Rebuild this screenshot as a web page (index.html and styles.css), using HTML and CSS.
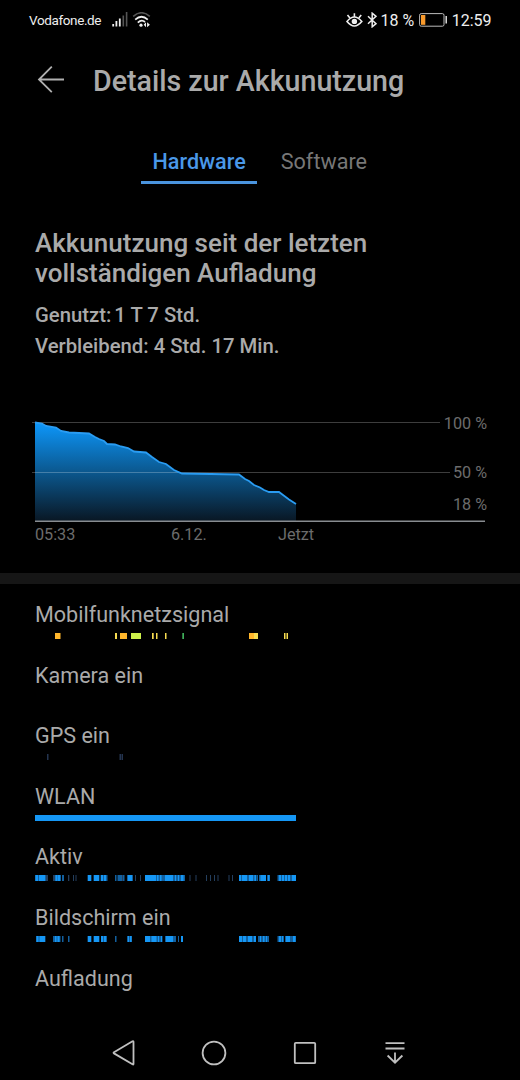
FILE: index.html
```html
<!DOCTYPE html>
<html lang="de">
<head>
    <meta charset="UTF-8">
    <meta name="viewport" content="width=device-width, initial-scale=1.0">
    <title>Details zur Akkunutzung</title>
    <link rel="stylesheet" href="styles.css">
</head>
<body>
    <div class="status-bar">
        <span class="carrier">Vodafone.de</span>
        <svg class="signal" width="16" height="16" viewBox="0 0 16 16">
            <path d="M1.2 12v2.6M4.4 9v5.6M7.8 6.5v8.1" stroke="#eee" stroke-width="1.8"/>
            <path d="M11.3 3.5v11.1M14.6 0v14.6" stroke="#555" stroke-width="1.6"/>
        </svg>
        <svg class="wifi" width="19" height="16" viewBox="0 0 19 16" fill="none">
            <path d="M1.2 4.3Q9.5-2.8 17.8 4.3" stroke="#555" stroke-width="1.6"/>
            <path d="M3.2 7.6Q9.5 1.9 15.8 7.6M5.8 10.7Q9.5 7 13 10" stroke="#eee" stroke-width="1.7"/>
            <circle cx="9" cy="13.2" r="1.6" fill="#eee"/>
            <path d="M14 10.2v5l-2.3-2.5zM15.1 10.2v5l2.8-2.5z" fill="#eee"/>
        </svg>
        <div class="status-right">
            <svg class="eye" width="17" height="15" viewBox="0 0 17 15" fill="none" stroke="#eee" stroke-width="1.6">
                <path d="M1 8.500Q8.300-.4 15.800 8.500Q8.300 17.400 1 8.500z"/>
                <path d="M8.400 4V.3M3.900 5L1.500 2M12.800 5l2.400-3"/>
                <circle cx="8.400" cy="8.400" r="2.700" fill="#eee" stroke="none"/>
            </svg>
            <svg class="bluetooth" width="11" height="16" viewBox="0 0 11 16" fill="none" stroke="#eee" stroke-width="1.5">
                <path d="M1 4.200l8 7.400-3.800 3.200V1.200L9 4.400 1 11.800"/>
            </svg>
            <span class="percent">18 %</span>
            <svg class="battery" width="29" height="14" viewBox="0 0 29 14">
                <rect x=".6" y=".6" width="24.400" height="12.600" rx="1.600" fill="none" stroke="#bbb"/>
                <rect x="2" y="2" width="4.300" height="9.800" fill="#f89a2c"/>
                <path d="M27.200 3v7.400" stroke="#eee" stroke-width="1.400"/>
            </svg>
            <span class="clock">12:59</span>
        </div>
    </div>

    <header class="title-bar">
        <svg width="28" height="28" viewBox="0 0 28 28" fill="none" stroke="#b0b0b0" stroke-width="1.8">
            <path d="M27 13.500H2M14.800 .7L2 13.500l12.800 12.600"/>
        </svg>
        <h1>Details zur Akkunutzung</h1>
    </header>

    <nav class="tabs">
        <a class="tab active">Hardware</a>
        <a class="tab">Software</a>
    </nav>

    <section class="summary">
        <h2>Akkunutzung seit der letzten vollständigen Aufladung</h2>
        <p class="used">Genutzt: <span>1 T 7 Std.</span></p>
        <p>Verbleibend: <span>4 Std. 17 Min.</span></p>
    </section>

    <section class="chart">
        <svg width="488" height="150" viewBox="32 405 488 150">
            <defs>
                <linearGradient id="level" x1="0" y1="0" x2="0" y2="1">
                    <stop offset="0" stop-color="#0d97fb"/>
                    <stop offset=".5" stop-color="#0b588f"/>
                    <stop offset="1" stop-color="#091724"/>
                </linearGradient>
            </defs>
            <path fill="url(#level)" d="M35 422.500L42 423.500 46 426 56 427.500 61 431 69 432.500 89 433.500 95 437 99 439 104 441 107 444 115 444.500 121 446.500 128 448 134 451.500 146 452.500 152 457 159 462 166 464 174 470 182 473.500 239 474.500 245 479 249 481 254 485 260 487.500 264 490 269 492 279 492 283 495 289 499.500 296 504V521H35z"/>
            <path class="grid" d="M32 422.500H440M32 472.500H450"/>
            <path class="curve" d="M35 422.500L42 423.500 46 426 56 427.500 61 431 69 432.500 89 433.500 95 437 99 439 104 441 107 444 115 444.500 121 446.500 128 448 134 451.500 146 452.500 152 457 159 462 166 464 174 470 182 473.500 239 474.500 245 479 249 481 254 485 260 487.500 264 490 269 492 279 492 283 495 289 499.500 296 504"/>
            <path class="axis" d="M35 521.200H485"/>
            <text x="487" y="428.500" text-anchor="end">100 %</text>
            <text x="487" y="478.200" text-anchor="end">50 %</text>
            <text x="487" y="510.200" text-anchor="end">18 %</text>
            <text x="35" y="540">05:33</text>
            <text x="171" y="540">6.12.</text>
            <text x="278" y="540">Jetzt</text>
        </svg>
    </section>

    <div class="divider"></div>

    <section class="usage">
        <div class="row">
            <span>Mobilfunknetzsignal</span>
            <svg class="bar" width="262" height="6">
                <path stroke="#ffb62b" d="M20 3h5.500M85 3h7M214 3h5"/>
                <path stroke="#f7dc50" d="M80 3h2M117 3h1.700M121 3h1.500M130 3h1.500M219 3h4M249 3h1.500M251.500 3h1.500"/>
                <path stroke="#cdf04b" d="M96 3h10"/>
                <path stroke="#3fae5a" d="M147.300 3h1.700"/>
            </svg>
        </div>
        <div class="row">
            <span>Kamera ein</span>
        </div>
        <div class="row">
            <span>GPS ein</span>
            <svg class="bar" width="262" height="6">
                <path stroke="#24344f" d="M12 3h1.500M84.500 3h1.500M86.500 3h1.500"/>
            </svg>
        </div>
        <div class="row">
            <span>WLAN</span>
            <svg class="bar" width="262" height="6">
                <path stroke="#1597f5" d="M0 3h261"/>
            </svg>
        </div>
        <div class="row">
            <span>Aktiv</span>
            <svg class="bar" width="262" height="6">
                <path stroke="#243f5e" d="M10.500 3h2.500M18 3h2M33 3h1.300M38 3h1M40.500 3h1M87 3h1M100 3h1M105 3h1M154.500 3h1M160.500 3h1M171 3h1M175 3h1M179 3h1M182.500 3h1M193.500 3h1M197 3h1"/>
                <path stroke="#12609f" d="M0 3h11M20 3h6M27 3h2M52.500 3h4M58.500 3h6M65.500 3h7M80 3h1.500M82.500 3h4.500M88 3h1.500M92 3h6M110 3h40M204 3h17M222 3h1M224 3h7M232 3h3M242.500 3h18.500"/>
                <path stroke="#1597f5" d="M.5 3h2.500M4 3h6M20.500 3h2M23 3h2M53 3h3M59 3h5M66 3h2M69 3h2M93 3h4M110 3h11M122 3h1.500M125 3h1.500M130 3h8M140 3h1M143 3h1M146 3h2.500M204 3h2M207 3h5M214 3h4M219.500 3h2M225.500 3h5.500M233 3h1.500M244 3h2M247 3h2M250 3h2M253 3h2M257 3h4"/>
            </svg>
        </div>
        <div class="row">
            <span>Bildschirm ein</span>
            <svg class="bar" width="262" height="6">
                <path stroke="#12609f" d="M1 3h9.500M18 3h7.500M27 3h1.500M33 3h1.500M52.500 3h4M58.500 3h6M66 3h6M80 3h1.500M92 3h5M110 3h17.500M130 3h11M143 3h1M146 3h2M204 3h17M223 3h11M242.500 3h6M250 3h11"/>
                <path stroke="#1597f5" d="M1.500 3h2M4.500 3h5.500M20 3h1.500M22.500 3h2M53 3h3M59 3h5M66 3h2M69 3h2M93 3h1M95 3h1.500M110 3h5M116.500 3h5M123 3h1M126 3h1M131 3h7M146 3h2M204 3h3M208 3h3M213 3h4M219 3h2M225 3h1M228 3h1.500M231 3h1M244 3h2M247 3h1.500M251 3h4M258 3h2.500"/>
            </svg>
        </div>
        <div class="row">
            <span>Aufladung</span>
        </div>
    </section>

    <footer class="nav-bar">
        <svg width="24" height="28" viewBox="0 0 24 28"><path d="M2 13.200L20.500 2.300q1-.6 1 .6v21.800q0 1.200-1 .6L2 14.400q-.9-.6 0-1.200z"/></svg>
        <svg width="28" height="28" viewBox="0 0 28 28"><circle cx="14" cy="14" r="11.400"/></svg>
        <svg width="24" height="24" viewBox="0 0 24 24"><rect x="1.800" y="1.800" width="20.400" height="20.400" rx="1"/></svg>
        <svg class="pull-down" width="22" height="24" viewBox="0 0 22 24"><path d="M1.500 2.200h19M1.500 7.500h19M11 11.500v10.200M3.600 14.500L11 21.700l7.400-7.200"/></svg>
    </footer>
</body>
</html>
```

FILE: styles.css
```css
body {
    margin: 0;
    width: 520px;
    height: 1080px;
    display: flex;
    flex-direction: column;
    overflow: hidden;
    background-color: #000;
    color: #aaa;
    font-family: Roboto, sans-serif;
}
body > * {
    flex-shrink: 0;
}
h1, h2, p {
    margin: 0;
    font-weight: 500;
}
.status-bar {
    display: flex;
    align-items: center;
    height: 40px;
    padding: 0 28.5px 0 29px;
    color: #eee;
}
.carrier {
    width: 72px;
    font-size: 13.5px;
    letter-spacing: -0.38px;
    white-space: nowrap;
}
.signal {
    margin-left: 11px;
}
.wifi {
    margin-left: 4px;
}
.status-right {
    display: flex;
    align-items: center;
    margin-left: auto;
    font-size: 16px;
}
.bluetooth {
    margin: 0 2px 0 4.5px;
}
.battery {
    margin: 0 3.5px 0 5px;
}
.title-bar {
    display: flex;
    align-items: center;
    height: 80px;
    padding-left: 37px;
    gap: 28px;
}
h1 {
    padding-top: 2px;
    font-size: 28.6px;
    line-height: 40px;
}
.tabs {
    display: flex;
    gap: 12px;
    height: 64px;
    padding-left: 141px;
    box-sizing: border-box;
    padding-top: 20px;
}
.tab {
    height: 41px;
    padding: 0 11.5px;
    border-bottom: 3px solid transparent;
    color: #777;
    font-size: 21.6px;
    line-height: 43px;
}
.tab.active {
    border-color: #4a94de;
    color: #4a98e8;
    font-weight: 500;
}
.summary {
    height: 177px;
    padding: 44px 35px 0;
}
h2 {
    width: 350px;
    margin-bottom: 12px;
    font-size: 26px;
    line-height: 30px;
}
.summary p {
    font-size: 20.3px;
    line-height: 30.5px;
}
.used span {
    margin-left: -2px;
}
.chart {
    height: 168px;
    padding-left: 32px;
}
.chart svg {
    display: block;
}
.chart text {
    fill: #6c6c6c;
    font-size: 16.2px;
}
.grid {
    stroke: #fff;
    stroke-opacity: 0.24;
}
.curve {
    fill: none;
    stroke: #2a9cf2;
    stroke-width: 1.8;
}
.axis {
    stroke: #888c90;
    stroke-width: 1.6;
}
.divider {
    height: 11px;
    background-color: #161616;
}
.usage {
    padding: 19px 35px 0;
}
.row {
    height: 60.6px;
    font-size: 21.55px;
    line-height: 24px;
}
.row:last-child {
    height: 40px;
}
.row span {
    display: block;
}
.bar {
    display: block;
    margin-top: 6px;
    stroke-width: 6;
}
.nav-bar {
    display: flex;
    align-items: center;
    gap: 64.5px;
    height: 55px;
    margin-top: auto;
    padding-left: 111.5px;
    fill: none;
    stroke: #c0c0c0;
    stroke-width: 1.8;
}
.pull-down {
    margin-left: 3px;
}
```
